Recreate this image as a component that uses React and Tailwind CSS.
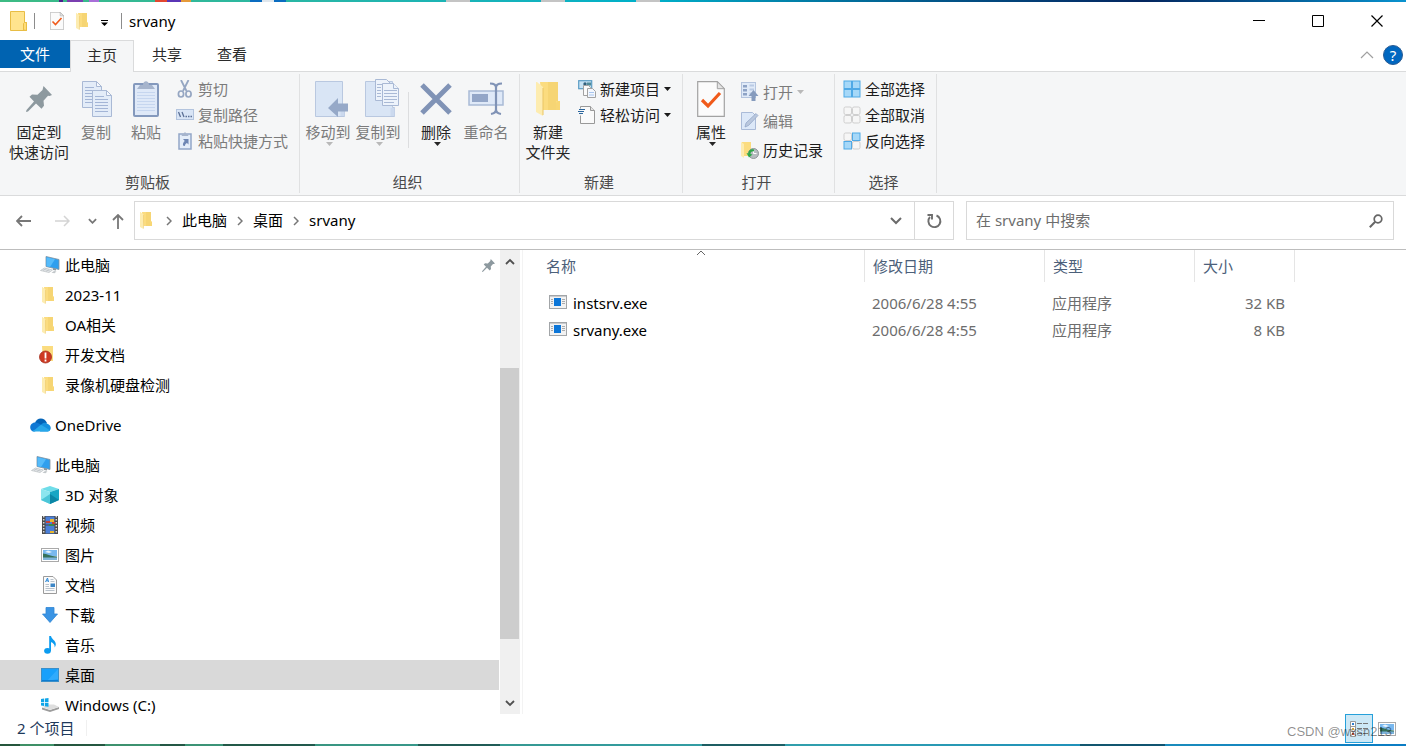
import { useState } from 'react'

const Folder = ({ className = 'w-3 h-[17px]' }) => (
  <svg className={className} viewBox="0 0 24 34">
    <path d="M4 0h18v19l2 1v8H7z" fill="#fbdc7f" />
    <path d="M12 0h10v19h-2v9h-8z" fill="#f3cf6c" opacity=".55" />
    <path d="M22 19h2v9h-4v-7z" fill="#f8d775" />
    <path d="M0 0h1l6 5v29l-7-4z" fill="#fdecb0" />
    <path d="M7 6v27" stroke="#eac564" strokeWidth="1" />
  </svg>
)

const AppFolder = () => (
  <svg className="w-[18px] h-5" viewBox="0 0 18 20">
    <path d="M.5.5h14v11h2v8H.5z" fill="#ffe48e" stroke="#e8bd45" />
    <path d="M13.5 19v-6.500l1-1h2v8z" fill="#ffdc75" stroke="#e8bd45" />
  </svg>
)

const DocCheck = ({ className }) => (
  <svg className={className} viewBox="0 0 28 36">
    <path d="M.7.7h19.6l7 7v27.6H.7z" fill="#fbfbfb" stroke="#a2a2a2" strokeWidth="1.2" />
    <path d="M20.3.7v7h7z" fill="#e4e4e4" stroke="#a2a2a2" />
    <path d="M5 19l6 6 12-13" fill="none" stroke="#f05a1a" strokeWidth="3.2" />
  </svg>
)

const Pin = ({ className, color = '#8d999f' }) => (
  <svg className={className} viewBox="0 0 26 26">
    <path d="M17.500 0L26 9l-2.500 1-1.500-.2-4.500 5 .5 5-2.500 3-5.500-5.300L2 25.500l-2 .5.500-2L8 15.500 3.500 10.800 6 8.500l5.500.300 5-4.800z" fill={color} />
  </svg>
)

const Sheet = ({ x, y }) => (
  <g transform={`translate(${x} ${y})`}>
    <path d="M.5.5h14l5 5v21H.5z" fill="#e3ecf8" stroke="#a9b9d5" />
    <path d="M14.500.5v5h5z" fill="#f5f8fd" stroke="#a9b9d5" />
    <path d="M3 6.500h9M3 9.500h13M3 12.500h13M3 15.500h13M3 18.500h13M3 21.500h13" stroke="#a3b5d6" />
  </g>
)

const CopyIcon = () => (
  <svg className="w-8 h-9" viewBox="0 0 32 36">
    <Sheet x={2} y={0} />
    <Sheet x={12} y={9} />
  </svg>
)

const PasteIcon = () => (
  <svg className="w-[26px] h-9" viewBox="0 0 26 36">
    <rect x="1" y="3" width="24" height="32" rx="1" fill="#dfe9f8" stroke="#8499bd" strokeWidth="2" />
    <path d="M4 11.500h18M4 14.500h18M4 17.500h18M4 20.500h18M4 23.500h18M4 26.500h18M4 29.500h18" stroke="#c6d6ef" />
    <path d="M4 8l3-4h3c0-5 6-5 6 0h3l3 4z" fill="#a6b4cc" />
  </svg>
)

const ScissorsIcon = () => (
  <svg className="w-[18px] h-[18px]" viewBox="0 0 18 18" fill="none" stroke="#95a6c2">
    <path d="M5 0l5.500 11M12.500 0L7 11" strokeWidth="1.800" />
    <ellipse cx="5" cy="14" rx="2.600" ry="3" strokeWidth="1.700" />
    <ellipse cx="12.500" cy="14" rx="2.600" ry="3" strokeWidth="1.700" />
  </svg>
)

const PathIcon = () => (
  <svg className="w-[18px] h-3" viewBox="0 0 18 12">
    <rect x=".5" y=".5" width="17" height="10" fill="#d9e5f6" stroke="#b3c4de" />
    <path d="M2.500 3l2 5M6 3l2 5" stroke="#5c7096" strokeWidth="1.300" />
    <path d="M9.500 7.500h1.500M12 7.500h1.500M14.500 7.500h1.500" stroke="#5c7096" strokeWidth="1.500" />
  </svg>
)

const ShortcutIcon = () => (
  <svg className="w-[18px] h-[18px]" viewBox="0 0 18 18">
    <rect x="3" y="2" width="12" height="15" fill="#e4edf9" stroke="#92a6c8" strokeWidth="1.500" />
    <path d="M5.500 4l1-2h1.500c0-2.500 2-2.500 2 0h1.500l1 2z" fill="#a6b4cc" />
    <path d="M7 7h5.500v5.500L11 11c-1.500.5-2 1.500-2 3l-2-.5c-.300-2 .5-3.500 1.800-4.500z" fill="#6e86b3" />
  </svg>
)

const MoveToIcon = () => (
  <svg className="w-[34px] h-9 ml-2" viewBox="0 0 34 36">
    <path d="M.5.5h27v26h2v9H.5z" fill="#d9e5f5" stroke="#b9c8e0" />
    <path d="M25.500 35v-8h4v8" fill="#cbd9ee" />
    <path d="M13 27l10-10v5.500h10v8H23V36z" fill="#96a9c8" />
  </svg>
)

const CopyToIcon = () => (
  <svg className="w-[34px] h-[38px] -mt-0.5 ml-2" viewBox="0 0 34 38">
    <path d="M.5 2.500h27v26h2v9H.5z" fill="#d9e5f5" stroke="#b9c8e0" />
    <path d="M25.500 37v-8h4v8" fill="#cbd9ee" />
    <g fill="#edf3fb" stroke="#a9b9d5">
      <path d="M10.500.5h11l4 4v17h-15z" />
      <path d="M17.500 4.500h11l5 5v17h-16z" />
      <path d="M12 5.500h5M12 8.500h4M12 11.500h4M12 14.500h4M12 17.500h4M19 11.500h13M19 14.500h13M19 17.500h13M19 20.500h13M19 23.500h10M28.500 4.500v5h5" />
    </g>
  </svg>
)

const DeleteIcon = () => (
  <svg className="w-8 h-8 mt-0.5" viewBox="0 0 32 32">
    <path d="M2 2l28 28M30 2L2 30" stroke="#8093b6" strokeWidth="5" />
  </svg>
)

const RenameIcon = () => (
  <svg className="w-9 h-[34px] mt-px" viewBox="0 0 36 34" fill="none">
    <rect x="1" y="9" width="34" height="14" fill="#dfe9f8" stroke="#a9bad6" strokeWidth="1.500" />
    <rect x="4" y="12" width="16" height="8" fill="#93a6c8" />
    <path d="M22 1.500c4 0 6 1 6 4v22c0 3-2 4-5 4.500M34 1.500c-4 0-6 1-6 4v22c0 3 2 4 5 4.500" stroke="#8093b6" strokeWidth="2.200" />
  </svg>
)

const NewItemIcon = () => (
  <svg className="w-[18px] h-[18px]" viewBox="0 0 18 18">
    <rect x=".7" y=".7" width="13" height="8" fill="#c7e3f5" stroke="#5a9cc4" strokeWidth="1.200" />
    <circle cx="7" cy="4" r="1.700" fill="#2f5f7c" />
    <path d="M9 2.500h4v3H9z" fill="#4f8a98" />
    <path d="M5.500 5.500h5l2 2v8h-7z" fill="#fafafa" stroke="#a2a2a2" />
    <path d="M9.500 8.500h5l3 3v6h-8z" fill="#f3f7fd" stroke="#a2a2a2" />
    <path d="M11 12.500h5M11 15h5" stroke="#a9c6ef" />
  </svg>
)

const EasyIcon = () => (
  <svg className="w-[18px] h-[18px]" viewBox="0 0 18 18">
    <path d="M2.500.5h10l4 4v13h-14z" fill="#fafafa" stroke="#999" />
    <path d="M12.500.5v4h4" fill="#e4e4e4" stroke="#999" />
    <path d="M0 6h4" stroke="#f5f6f7" strokeWidth="7" />
    <path d="M1 3.500h6M0 5.500h6M1 7.500h4" stroke="#2a659c" strokeWidth="1" />
  </svg>
)

const OpenIcon = () => (
  <svg className="w-[18px] h-5" viewBox="0 0 18 20">
    <rect x=".5" y=".5" width="14" height="15" fill="#e0eaf8" stroke="#b4c4de" />
    <path d="M2 3h4v2.500H2zM2 7h4v2.500H2zM2 11h4v2.500H2z" fill="#8ea3c6" />
    <path d="M8.500 3.500h4.500M8.500 7.500h4.500M8.500 11.500h3" stroke="#b9cae4" strokeWidth="2" />
    <path d="M12.500 8l5 6h-3v5h-4v-5h-3z" fill="#869bbd" />
  </svg>
)

const EditIcon = () => (
  <svg className="w-[18px] h-[18px]" viewBox="0 0 18 18">
    <path d="M.5.5h11l3 3v14H.5z" fill="#dce8f8" stroke="#aabbd8" />
    <path d="M4 15l1-4L15 1.500l2 2L7.500 13.500z" fill="#b9c7dd" stroke="#8ea2c4" strokeWidth=".7" />
  </svg>
)

const HistoryIcon = () => (
  <svg className="w-[18px] h-[18px]" viewBox="0 0 18 18">
    <path d="M1 1h9v14H2z" fill="#fbdc7f" />
    <path d="M0 1l3 2v14l-3-2z" fill="#fdecb0" />
    <circle cx="12.500" cy="12.500" r="5" fill="#b6bcc0" stroke="#8f9699" />
    <path d="M12.500 9v3.500h3" stroke="#fff" fill="none" />
    <path d="M13 8.500c-3-1-6 1-5.500 4l-2-.5 2.500 4.500 3.500-3-2-.5c0-2 1.500-3 3.500-2.500z" fill="#2fa84a" />
  </svg>
)

// on: which of the four tiles are drawn as selected
const TilesIcon = ({ on }) => (
  <svg className="w-[18px] h-[18px]" viewBox="0 0 18 18">
    {[0, 1, 2, 3].map((i) => (
      <rect
        key={i}
        x={(i % 2) * 8.5 + 1}
        y={Math.floor(i / 2) * 8.5 + 1}
        width="7.5"
        height="7.5"
        rx={on[i] ? 0 : 1.5}
        fill={on[i] ? '#a6d8f8' : '#f6f6f6'}
        stroke={on[i] ? '#4fa9e6' : '#cfcfcf'}
      />
    ))}
  </svg>
)

const PcIcon = () => (
  <svg className="w-5 h-[18px]" viewBox="0 0 20 18">
    <path d="M6 .5l13 3v10l-13-3z" fill="#2f9fee" stroke="#8193a0" strokeWidth=".8" />
    <path d="M6.500 1.200L15 3.200 10 11l-3.500-.8z" fill="#55bbfa" />
    <path d="M13 12l3 .8v1.700l-3-.5z" fill="#8b979e" />
    <path d="M4.500 12l8 2-3.500 2.500-8.500-2z" fill="#e6e9eb" stroke="#b9bec2" strokeWidth=".7" />
    <path d="M3.500 13.300l6.500 1.700M6 12.700l-3 2M9 13.500l-3 2" stroke="#b9bec2" strokeWidth=".6" />
    <path d="M14 15l2.500.6-2 1.700-3-.600z" fill="#c2c7ca" />
  </svg>
)

const AlertFolder = () => (
  <svg className="w-[15px] h-[18px] -ml-[7px]" viewBox="0 0 15 18">
    <path d="M3 0h11v15H4z" fill="#fbdc7f" />
    <circle cx="6.500" cy="11" r="6" fill="#cf3a22" stroke="#a5301f" strokeWidth=".8" />
    <path d="M6.500 6.500v6M6.500 13.500v2" stroke="#fff" strokeWidth="1.800" />
  </svg>
)

const CloudIcon = () => (
  <svg className="w-[21px] h-[14px]" viewBox="0 0 21 14">
    <path d="M5 5c1-5 9-7 12 0l-6 5z" fill="#0364b8" />
    <path d="M1 12c-2-3 0-7.500 4-7.500 3 0 5 1.500 6.500 2.500L5 13.500c-2 0-3-.5-4-1.500z" fill="#0f78d4" />
    <path d="M11 6.800c2-2.800 5-2.600 6.300-1 3.300 1 4.500 4.500 2.500 6.700-.8.800-1.800 1-2.800 1H10z" fill="#1490df" />
    <path d="M2 13c4-1 6-4.500 9-6.200l9 5.400c-.8 1-2 1.300-3 1.300H5c-1 0-2-.100-3-.5z" fill="#28a8ea" />
  </svg>
)

const CubeIcon = () => (
  <svg className="w-[18px] h-[18px]" viewBox="0 0 18 18">
    <path d="M0 3l9-3 9 3-9 3z" fill="#6fdde9" />
    <path d="M0 3l9 3v12l-9-4z" fill="#8ce6ef" />
    <path d="M0 14l9-6v10z" fill="#4cc6d8" />
    <path d="M18 3l-9 3v12l9-4z" fill="#17a6c4" />
    <path d="M9 8l9 6-9 4z" fill="#0b86a6" />
  </svg>
)

const VideoIcon = () => (
  <svg className="w-4 h-[18px]" viewBox="0 0 16 18">
    <path d="M0 0h16v18H0z" fill="#4a4a4a" />
    <path d="M3.500.5h9v8h-9zM3.500 9.500h9v8h-9z" fill="#4a7fd8" />
    <path d="M1.700 0v18M14.300 0v18" stroke="#d8d8d8" strokeWidth="1.500" strokeDasharray="1.500 1.500" />
    <path d="M8 3h4v3H8zM8 15h4v2H8z" fill="#e8b72e" />
    <path d="M4 5h4v2H4zM10 6h3v2h-3z" fill="#c94133" />
    <path d="M7 8h5v2H7z" fill="#3a8b47" />
  </svg>
)

const PictureIcon = () => (
  <svg className="w-[18px] h-[14px]" viewBox="0 0 18 14">
    <rect x=".5" y=".5" width="17" height="13" fill="#fff" stroke="#a9a9a9" />
    <path d="M2 2h14v6H2z" fill="#79b8ee" />
    <path d="M4 4l3-1.500 4 1.500-3 1z" fill="#e9f4fc" />
    <path d="M2 5.500c4 0 7 3 14 3V10H2z" fill="#35715b" />
    <path d="M2 9.500h14V12H2z" fill="#7fb4da" />
  </svg>
)

const DocIcon = () => (
  <svg className="w-[14px] h-[18px]" viewBox="0 0 14 18">
    <path d="M.5.5h9.500l3.500 3.500v13.500H.5z" fill="#fbfbfb" stroke="#9b9b9b" />
    <path d="M2.500 6l2-4 1 4M3.200 4.800h2" fill="none" stroke="#2b88d8" strokeWidth="1" />
    <path d="M7.500 3.500h3M7.500 5.500h4M2.500 8.500h3.500M2.500 10.500h3.500M2.500 12.500h9M2.500 14.500h9" stroke="#b9c2cb" />
    <path d="M7.500 7.500h4.500v3.500H7.500z" fill="#3d86c6" />
  </svg>
)

const DownIcon = () => (
  <svg className="w-4 h-4" viewBox="0 0 16 16">
    <path d="M4 .5h8V7h3.500L8 15.500.5 7H4z" fill="#3a94e4" stroke="#2f85d4" strokeWidth=".8" />
  </svg>
)

const MusicIcon = () => (
  <svg className="w-3 h-[18px]" viewBox="0 0 12 18">
    <ellipse cx="3.500" cy="14.800" rx="3.400" ry="2.900" fill="#0c9cf0" />
    <path d="M5.200 0h1.800c.3 3 5 4.500 4.800 8.500 0 1-.5 2-1.200 3 .5-3-1.500-4.500-3.600-5.500v9H5.200z" fill="#0c9cf0" />
  </svg>
)

const DesktopIcon = () => (
  <svg className="w-[18px] h-[14px]" viewBox="0 0 18 14">
    <rect x=".5" y=".5" width="17" height="13" fill="#18a0fb" stroke="#3a8fc9" />
    <path d="M17 1v10L6 13z" fill="#41b3ff" opacity=".6" />
    <path d="M1 12.500h16" stroke="#0d7cd0" />
  </svg>
)

const DriveIcon = () => (
  <svg className="w-[18px] h-[14px]" viewBox="0 0 18 14">
    <path d="M1 9.500l8 2.500 9-3v2L9 14l-8-2.500z" fill="#9c9c9c" />
    <path d="M1 9l8 2.800 9-2.800-5-2.500H8z" fill="#dedede" />
    <path d="M0 1l3-.5V4H0zM3.800.4L7.500 0v4H3.800zM0 4.700h3V8L0 7.600zM3.800 4.700h3.700v4L3.800 8.200z" fill="#10a5e8" />
  </svg>
)

const ExeIcon = () => (
  <svg className="w-[18px] h-[14px] -mt-[3px]" viewBox="0 0 18 14">
    <rect x=".5" y=".5" width="17" height="13" fill="#f2f2f2" stroke="#a2a5a8" />
    <path d="M1 1.500h16" stroke="#c9cbce" />
    <path d="M5 3h7v8H5z" fill="#0c76d8" />
    <path d="M2 4.500h2M2 6.500h2M2 8.500h2M13 4.500h3M13 6.500h3M13 8.500h3" stroke="#a9abad" />
  </svg>
)

const Chevron = ({ className, d = 'M1 1l4 4 4-4', box = '0 0 10 6', width = 1.5 }) => (
  <svg className={className} viewBox={box} fill="none" stroke="currentColor" strokeWidth={width}>
    <path d={d} />
  </svg>
)

const Caret = ({ className = '' }) => (
  <svg className={`w-[7px] h-1 shrink-0 ${className}`} viewBox="0 0 7 4" fill="currentColor">
    <path d="M0 0h7L3.500 4z" />
  </svg>
)

function BigButton({ icon, lines, caret, disabled, className = 'w-[50px]' }) {
  return (
    <button
      type="button"
      disabled={disabled}
      className={`flex flex-col items-center pt-1.5 leading-5 whitespace-nowrap text-[#262626] disabled:text-[#7b7b7b] ${className}`}
    >
      <span className="flex h-10 mb-0.5 pt-px justify-center items-start">{icon}</span>
      {lines.map((line) => (
        <span key={line}>{line}</span>
      ))}
      {caret && <Caret className={disabled ? 'ml-0.5 text-[#b9b9b9]' : 'ml-0.5'} />}
    </button>
  )
}

function SmallButton({ icon, label, caret, disabled, className = 'h-[26px]' }) {
  return (
    <button
      type="button"
      disabled={disabled}
      className={`flex items-center gap-1 leading-5 whitespace-nowrap text-[#1b1b1b] disabled:text-[#7b7b7b] ${className}`}
    >
      <span className="flex w-[18px] justify-center">{icon}</span>
      {label}
      {caret && <Caret className={disabled ? 'text-[#b9b9b9]' : ''} />}
    </button>
  )
}

function Group({ title, className, inset = 'pl-[3px]', children }) {
  return (
    <section className={`flex flex-col justify-between my-0.5 pb-px border-r border-[#e0e1e2] ${className}`}>
      <div className={`flex items-start ${inset}`}>{children}</div>
      <h2 className="pr-1 text-center leading-5 text-[#4a4a4a]">{title}</h2>
    </section>
  )
}

const places = [
  { id: 'quick-pc', label: '此电脑', icon: <PcIcon />, pinned: true },
  { id: '2023-11', label: '2023-11', icon: <Folder className="w-3 h-[17px] -ml-1" /> },
  { id: 'oa', label: 'OA相关', icon: <Folder className="w-3 h-[17px] -ml-1" /> },
  { id: 'dev', label: '开发文档', icon: <AlertFolder /> },
  { id: 'nvr', label: '录像机硬盘检测', icon: <Folder className="w-3 h-[17px] -ml-1" /> },
  { id: 'onedrive', label: 'OneDrive', icon: <CloudIcon />, root: true },
  { id: 'pc', label: '此电脑', icon: <PcIcon />, root: true },
  { id: '3d', label: '3D 对象', icon: <CubeIcon /> },
  { id: 'video', label: '视频', icon: <VideoIcon /> },
  { id: 'pictures', label: '图片', icon: <PictureIcon /> },
  { id: 'docs', label: '文档', icon: <DocIcon /> },
  { id: 'downloads', label: '下载', icon: <DownIcon /> },
  { id: 'music', label: '音乐', icon: <MusicIcon /> },
  { id: 'desktop', label: '桌面', icon: <DesktopIcon /> },
  { id: 'c', label: 'Windows (C:)', icon: <DriveIcon /> },
]

const files = [
  { name: 'instsrv.exe', date: '2006/6/28 4:55', type: '应用程序', size: '32 KB' },
  { name: 'srvany.exe', date: '2006/6/28 4:55', type: '应用程序', size: '8 KB' },
]

function TitleBar() {
  return (
    <header className="flex h-[38px] shrink-0 items-center">
      <div className="flex items-center pl-[10px]">
        <AppFolder />
        <span className="w-px h-4 ml-1.5 mr-[15px] bg-[#8c8c8c]" />
        <button type="button" aria-label="属性"><DocCheck className="w-[14px] h-[18px]" /></button>
        <button type="button" aria-label="新建文件夹" className="ml-3"><Folder className="w-3 h-[17px]" /></button>
        <button type="button" aria-label="自定义快速访问工具栏" className="ml-[13px]">
          <svg className="w-[7px] h-1.5 mt-1" viewBox="0 0 7 6">
            <path d="M0 0h7v1H0zM0 2.500h7L3.500 6z" />
          </svg>
        </button>
        <span className="w-px h-4 ml-[13px] mr-[7px] bg-[#8c8c8c]" />
        <h1 className="text-black">srvany</h1>
      </div>
      <div className="flex ml-auto h-full">
        <button type="button" aria-label="最小化" className="w-[59px] flex items-center justify-center">
          <svg className="w-3 h-3" viewBox="0 0 12 12"><path d="M0 5.500h12" stroke="#000" /></svg>
        </button>
        <button type="button" aria-label="最大化" className="w-[59px] flex items-center justify-center">
          <svg className="w-3 h-3" viewBox="0 0 12 12"><path d="M.5.5h11v11H.5z" fill="none" stroke="#000" /></svg>
        </button>
        <button type="button" aria-label="关闭" className="w-[59px] flex items-center justify-center">
          <svg className="w-3 h-3" viewBox="0 0 12 12"><path d="M.5.5l11 11M11.500.5l-11 11" stroke="#000" strokeWidth="1.200" /></svg>
        </button>
      </div>
    </header>
  )
}

function Tabs() {
  return (
    <nav className="flex h-8 shrink-0 border-b border-[#dadbdc] text-[#2b2b2b]">
      <button type="button" className="w-[70px] h-7 bg-[#0063b1] text-white">文件</button>
      <button type="button" className="w-16 h-8 pb-0.5 bg-[#f5f6f7] border border-b-0 border-[#dadbdc]">主页</button>
      <button type="button" className="w-[66px] pb-0.5">共享</button>
      <button type="button" className="w-16 pb-0.5">查看</button>
      <div className="flex items-center ml-auto gap-[9px] pr-[3px] pb-0.5">
        <button type="button" aria-label="最小化功能区" className="text-[#a0a0a0]">
          <Chevron className="w-[14px] h-2" d="M1 7l6-6 6 6" box="0 0 14 8" width={1.2} />
        </button>
        <button type="button" aria-label="帮助" className="w-5 h-5 rounded-full bg-[#0067c0] border border-[#2a5c94] text-white leading-4">
          ?
        </button>
      </div>
    </nav>
  )
}

function Ribbon() {
  return (
    <div className="flex h-[124px] shrink-0 bg-[#f5f6f7] border-b border-[#dadbdc]">
      <Group title="剪贴板" className="w-[300px]" inset="pl-[7px]">
        <BigButton icon={<Pin className="w-[26px] h-[26px] mt-[5px]" />} lines={['固定到', '快速访问']} className="w-16" />
        <BigButton icon={<CopyIcon />} lines={['复制']} disabled />
        <BigButton icon={<PasteIcon />} lines={['粘贴']} disabled />
        <div className="flex flex-col pt-0.5 pl-[5px]">
          <SmallButton icon={<ScissorsIcon />} label="剪切" disabled />
          <SmallButton icon={<PathIcon />} label="复制路径" disabled />
          <SmallButton icon={<ShortcutIcon />} label="粘贴快捷方式" disabled />
        </div>
      </Group>
      <Group title="组织" className="w-[220px]">
        <BigButton icon={<MoveToIcon />} lines={['移动到']} caret disabled />
        <BigButton icon={<CopyToIcon />} lines={['复制到']} caret disabled />
        <span className="w-px h-14 mt-[18px] ml-[5px] mr-0.5 bg-[#dcdddf]" />
        <BigButton icon={<DeleteIcon />} lines={['删除']} caret />
        <BigButton icon={<RenameIcon />} lines={['重命名']} disabled />
      </Group>
      <Group title="新建" className="w-[163px]">
        <BigButton icon={<Folder className="w-6 h-[34px] mt-px" />} lines={['新建', '文件夹']} />
        <div className="flex flex-col pt-0.5 pl-[5px]">
          <SmallButton icon={<NewItemIcon />} label="新建项目" caret />
          <SmallButton icon={<EasyIcon />} label="轻松访问" caret />
        </div>
      </Group>
      <Group title="打开" className="w-[152px]">
        <BigButton icon={<DocCheck className="w-7 h-9" />} lines={['属性']} caret />
        <div className="flex flex-col pt-[3px] pl-[5px]">
          <SmallButton icon={<OpenIcon />} label="打开" caret disabled className="h-[29px]" />
          <SmallButton icon={<EditIcon />} label="编辑" disabled className="h-[29px]" />
          <SmallButton icon={<HistoryIcon />} label="历史记录" className="h-[29px]" />
        </div>
      </Group>
      <Group title="选择" className="w-[102px]" inset="pl-2">
        <div className="flex flex-col pt-0.5">
          <SmallButton icon={<TilesIcon on={[1, 1, 1, 1]} />} label="全部选择" />
          <SmallButton icon={<TilesIcon on={[0, 0, 0, 0]} />} label="全部取消" />
          <SmallButton icon={<TilesIcon on={[0, 1, 1, 0]} />} label="反向选择" />
        </div>
      </Group>
    </div>
  )
}

function Crumb({ children }) {
  return (
    <li className="flex items-center">
      <Chevron className="w-1.5 h-[10px] mx-[10px] text-[#777]" d="M1 1l4 4-4 4" box="0 0 6 10" />
      <a href="#" className="text-black">{children}</a>
    </li>
  )
}

function AddressBar() {
  const [query, setQuery] = useState('')

  return (
    <div className="flex items-center h-[54px] shrink-0 pr-3 pb-1 border-b border-[#bdbdbd]">
      <div className="flex w-[134px] items-center pl-4 text-[#777]">
        <button type="button" aria-label="返回">
          <Chevron className="w-[15px] h-3" d="M15 6H1M6 1L1 6l5 5" box="0 0 15 12" width={1.8} />
        </button>
        <button type="button" aria-label="前进" className="ml-6 text-[#d4d4d4]">
          <Chevron className="w-[15px] h-3" d="M0 6h14M9 1l5 5-5 5" box="0 0 15 12" />
        </button>
        <button type="button" aria-label="最近浏览的位置" className="ml-[18px]">
          <Chevron className="w-[9px] h-1.5" width={2} />
        </button>
        <button type="button" aria-label="向上" className="ml-[15px]">
          <Chevron className="w-3 h-[15px] mt-0.5" d="M6 15V1M1 6l5-5 5 5" box="0 0 12 15" width={1.8} />
        </button>
      </div>
      <div className="flex flex-1 h-[39px] border border-[#d9d9d9]">
        <ol className="flex flex-1 items-center pl-[5px]">
          <li className="mr-1"><Folder /></li>
          <Crumb>此电脑</Crumb>
          <Crumb>桌面</Crumb>
          <Crumb>srvany</Crumb>
        </ol>
        <button type="button" aria-label="以前的位置" className="flex w-9 items-center justify-center text-[#6b6b6b]">
          <Chevron className="w-3 h-2" d="M1 1l5 5 5-5" box="0 0 12 8" width={2} />
        </button>
        <button type="button" aria-label="刷新" className="flex w-[39px] items-center justify-center border-l border-[#d9d9d9]">
          <svg className="w-4 h-4" viewBox="0 0 16 16" fill="none" stroke="#6e6e6e" strokeWidth="1.900">
            <path d="M10.500 2.500A6 6 0 1 1 4 4M1.500 2h4.500v4.500" />
          </svg>
        </button>
      </div>
      <label className="flex w-[428px] h-[39px] ml-3 items-center pl-[9px] pr-[10px] border border-[#d9d9d9]">
        <input
          type="text"
          value={query}
          onChange={(e) => setQuery(e.target.value)}
          placeholder="在 srvany 中搜索"
          aria-label="搜索"
          className="flex-1 min-w-0 outline-none placeholder-[#6d6d6d]"
        />
        <svg className="w-[14px] h-[14px]" viewBox="0 0 14 14" fill="none" stroke="#666">
          <circle cx="9" cy="5" r="3.800" strokeWidth="1.700" />
          <path d="M6.200 7.800L.8 13.200" strokeWidth="2" />
        </svg>
      </label>
    </div>
  )
}

function Sidebar() {
  const [active, setActive] = useState('desktop')

  return (
    <aside className="flex w-[520px] shrink-0">
      <ul className="flex-1 overflow-hidden">
        {places.map((p) => (
          <li key={p.id} className={p.id === 'onedrive' || p.id === 'pc' ? 'mt-[10px]' : ''}>
            <button
              type="button"
              onClick={() => setActive(p.id)}
              className={`flex w-[499px] h-[30px] items-center text-left text-black ${p.root ? 'pl-[30px]' : 'pl-10'} ${active === p.id ? 'bg-[#d9d9d9]' : ''}`}
            >
              <span className={`flex justify-center ${p.root ? 'w-[21px] mr-1' : 'w-5 mr-[5px]'}`}>{p.icon}</span>
              {p.label}
              {p.pinned && <Pin className="w-[13px] h-[13px] ml-auto mr-1" />}
            </button>
          </li>
        ))}
      </ul>
      <div className="flex flex-col w-5 items-center bg-[#f0f0f0] text-[#505050]">
        <button type="button" aria-label="向上滚动" className="flex h-[22px] items-center">
          <Chevron className="w-[10px] h-[7px]" d="M1 6l4-4 4 4" box="0 0 10 7" width={1.8} />
        </button>
        <div className="flex flex-col flex-1 w-full">
          <div className="flex-[96]" />
          <div className="flex-[271] w-[19px] bg-[#cdcdcd]" />
          <div className="flex-[53]" />
        </div>
        <button type="button" aria-label="向下滚动" className="flex h-[22px] items-center">
          <Chevron className="w-[10px] h-[7px]" d="M1 1l4 4 4-4" box="0 0 10 7" width={1.8} />
        </button>
      </div>
    </aside>
  )
}

function FileList() {
  const head = 'relative h-8 pl-2 text-left font-normal text-[#4c607a] border-r border-[#e5e5e5]'

  return (
    <main className="flex-1 ml-0.5 pl-[15px] border-l border-[#f3f3f3] overflow-hidden">
      <table className="table-fixed w-[757px] border-separate border-spacing-0">
        <thead>
          <tr>
            <th className={`${head} w-[327px]`}>
              名称
              <Chevron className="absolute top-0 left-1/2 w-[10px] h-1.5 -translate-x-1/2 text-[#666]" d="M1 5l4-4 4 4" width={1} />
            </th>
            <th className={`${head} w-[180px]`}>修改日期</th>
            <th className={`${head} w-[150px]`}>类型</th>
            <th className={`${head} w-[100px]`}>大小</th>
          </tr>
        </thead>
        <tbody className="before:block before:h-2 text-[#6d6d6d]">
          {files.map((f) => (
            <tr key={f.name} className="h-[27px]">
              <td className="p-0 pl-[11px] text-black">
                <span className="flex items-center gap-1.5">
                  <ExeIcon />
                  {f.name}
                </span>
              </td>
              <td className="p-0 pl-[7px]">{f.date}</td>
              <td className="p-0 pl-[7px]">{f.type}</td>
              <td className="p-0 pr-[10px] text-right">{f.size}</td>
            </tr>
          ))}
        </tbody>
      </table>
    </main>
  )
}

function StatusBar() {
  return (
    <footer className="relative flex h-[30px] shrink-0 items-center pl-[17px] pr-[10px]">
      <span className="mb-0.5 pr-3 border-r border-[#f0f0f0] leading-4 text-[#1e395b]">2 个项目</span>
      <div className="flex ml-auto items-center gap-[5px] h-full">
        <button type="button" aria-label="详细信息" className="flex w-7 h-[29px] items-center justify-center bg-[#cce8f6] border border-[#26a0da] self-start">
          <svg className="w-[18px] h-4" viewBox="0 0 18 16" fill="none">
            <path d="M.5.5h5v15h-5zM.5 5.500h5M.5 10.500h5" fill="#fff" stroke="#999" />
            <path d="M2 3h2" stroke="#2f7fd0" strokeWidth="2" />
            <path d="M2 8h2" stroke="#d0a040" strokeWidth="2" />
            <path d="M2 13h2" stroke="#c95540" strokeWidth="2" />
            <path d="M7 2.500h5M13 2.500h5M7 7.500h5M13 7.500h5M7 12.500h5M13 12.500h5" stroke="#777" />
          </svg>
        </button>
        <button type="button" aria-label="大图标"><PictureIcon /></button>
      </div>
      <p className="absolute right-[14px] bottom-1 font-['Liberation_Sans'] text-[13px] leading-4 text-black/45 pointer-events-none">
        CSDN @wxsn213
      </p>
    </footer>
  )
}

// slivers of the desktop above and below the window
function DesktopTop() {
  return (
    <div className="flex h-0.5 shrink-0 bg-linear-to-r from-[#3dbb83] via-[#00b0c8] via-45% to-[#006fb8]">
      <span className="w-1 ml-[59px] bg-[#4b1f8c]" />
      <span className="w-4 ml-1 bg-[#7a3fb0]" />
      <span className="w-2.5 ml-1.5 bg-[#a86fd8]" />
      <span className="w-3 ml-14 bg-[#e2472f]" />
      <span className="w-3.5 bg-[#5a35b5]" />
      <span className="w-2.5 bg-[#e59a3a]" />
      <span className="w-3 ml-[59px] bg-[#0a6cc0]" />
      <span className="w-3 bg-[#dfe6ec]" />
      <span className="w-3 bg-[#0a6cc0]" />
      <span className="w-6 ml-[160px] bg-[#c4c4c4]" />
      <span className="w-6 ml-[71px] bg-[#c4c4c4]" />
      <span className="w-6 ml-[71px] bg-[#c4c4c4]" />
      <span className="flex-1 bg-linear-to-r from-transparent via-[#04265f] via-65% to-[#0a93cf]" />
    </div>
  )
}

function DesktopBottom() {
  return (
    <div className="flex h-0.5 shrink-0 bg-linear-to-r from-[#3f8f63] via-[#2f9fb0] via-60% to-[#0a7cc4]">
      <span className="w-5 bg-black/40" />
      <span className="w-[51px] ml-[34px] bg-black/40" />
      <span className="w-[25px] ml-[55px] bg-black/40" />
      <span className="w-[92px] ml-[38px] bg-black/40" />
      <span className="w-[82px] ml-[103px] bg-black/40" />
      <span className="w-[83px] ml-[202px] bg-black/40" />
      <span className="w-[85px] ml-[295px] bg-black/40" />
    </div>
  )
}

export default function App() {
  return (
    <div className="flex flex-col h-screen bg-white overflow-hidden text-[15px] font-['Noto_Sans','Noto_Sans_CJK_SC',sans-serif]">
      <DesktopTop />
      <TitleBar />
      <Tabs />
      <Ribbon />
      <AddressBar />
      <div className="flex flex-1 min-h-0">
        <Sidebar />
        <FileList />
      </div>
      <StatusBar />
      <DesktopBottom />
    </div>
  )
}
